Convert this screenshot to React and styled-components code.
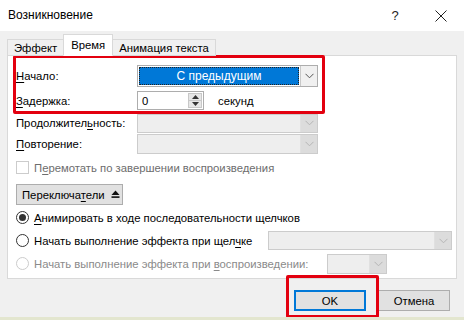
import React from "react";
import styled, { createGlobalStyle } from "styled-components";

const Global = createGlobalStyle`
  html, body { margin: 0; padding: 0; background: #f0f0f0; }
  body { font-family: "Liberation Sans", Arial, sans-serif; font-size: 11.3px; color: #000; }
`;

const Dialog = styled.div`
  position: relative;
  width: 464px;
  height: 320px;
  background: #f0f0f0;
  display: flex;
  flex-direction: column;
  overflow: hidden;
  border-bottom: 3px solid #e3e6cf;
  box-sizing: border-box;
`;

const TitleBar = styled.div`
  height: 31px;
  background: #fff;
  display: flex;
  align-items: center;
  padding-left: 8px;
  font-size: 12px;
`;

const Title = styled.div`
  flex: 1;
  margin-top: -1px;
`;

const TitleBtn = styled.div`
  width: 46px;
  display: flex;
  justify-content: center;
  font-size: 13px;
  color: #222;
`;

const Body = styled.div`
  padding: 5px 7px 0 7px;
  display: flex;
  flex-direction: column;
`;

const Tabs = styled.div`
  display: flex;
  align-items: flex-end;
  height: 20px;
  position: relative;
  z-index: 1;
  margin-bottom: -1px;
`;

const Tab = styled.div`
  height: ${(p) => (p.$active ? "20px" : "15px")};
  padding: 0 ${(p) => (p.$active ? "7px" : "6px")};
  background: ${(p) => (p.$active ? "#fff" : "#f0f0f0")};
  border: 1px solid #d9d9d9;
  border-bottom: ${(p) => (p.$active ? "1px solid #fff" : "1px solid #d9d9d9")};
  border-left: ${(p) => (p.$first || p.$active ? "1px solid #d9d9d9" : "none")};
  border-right: ${(p) => (p.$beforeActive ? "none" : "1px solid #d9d9d9")};
  display: flex;
  align-items: ${(p) => (p.$active ? "center" : "flex-end")};
  line-height: 14px;
  box-sizing: content-box;
  white-space: nowrap;
`;

const Panel = styled.div`
  background: #fff;
  border: 1px solid #d9d9d9;
  height: 224px;
  box-sizing: border-box;
  padding: 8px 4px 0 8px;
  display: flex;
  flex-direction: column;
`;

const FormRow = styled.div`
  display: flex;
  align-items: center;
  height: ${(p) => p.$h || 21}px;
  white-space: nowrap;
`;

const Label = styled.div`
  width: 121px;
`;

const U = styled.span`
  text-decoration: underline;
  text-underline-offset: 2px;
`;

const Combo = styled.div`
  width: ${(p) => p.$w}px;
  height: ${(p) => p.$h || 19}px;
  border: 1px solid ${(p) => (p.$disabled ? "#cccccc" : "#adadad")};
  background: ${(p) => (p.$disabled ? "#eeeeee" : "#fff")};
  display: flex;
  flex-shrink: 0;
  box-sizing: border-box;
  margin-left: ${(p) => (p.$right ? "auto" : `${p.$ml || 0}px`)};
`;

const ComboValue = styled.div`
  flex: 1;
  margin: 1px;
  background: ${(p) => (p.$selected ? "#0078d7" : "transparent")};
  color: #fff;
  outline: ${(p) => (p.$selected ? "1px dotted #222" : "none")};
  outline-offset: -1px;
  display: flex;
  align-items: center;
  justify-content: center;
  font-size: 12px;
`;

const ComboArrow = styled.div`
  width: 16px;
  border-left: 1px solid ${(p) => (p.$disabled ? "#e0e0e0" : "#c8c8c8")};
  background: ${(p) => (p.$disabled ? "#dcdcdc" : "#f0f0f0")};
  display: flex;
  align-items: center;
  justify-content: center;
`;

const Spin = styled.div`
  width: 67px;
  height: 19px;
  border: 1px solid #adadad;
  background: #fff;
  display: flex;
  box-sizing: border-box;
`;

const SpinValue = styled.div`
  flex: 1;
  padding-left: 4px;
  display: flex;
  align-items: center;
`;

const SpinButtons = styled.div`
  width: 12px;
  margin: 1px;
  display: flex;
  flex-direction: column;
  background: #e6e6e6;
  border: 1px solid #c8c8c8;
`;

const SpinHalf = styled.div`
  flex: 1;
  display: flex;
  align-items: center;
  justify-content: center;
  border-top: ${(p) => (p.$bottom ? "1px solid #c8c8c8" : "none")};
`;

const Units = styled.div`
  margin-left: 14px;
`;

const CheckRow = styled.div`
  display: flex;
  align-items: center;
  height: 19px;
  margin-top: 3px;
  color: #6d6d6d;
  white-space: nowrap;
`;

const CheckBox = styled.div`
  width: 11px;
  height: 11px;
  border: 1px solid #cccccc;
  background: #fff;
  margin-right: 5px;
`;

const ToggleButton = styled.div`
  margin-top: 7px;
  width: 107px;
  height: 21px;
  box-sizing: border-box;
  background: #e1e1e1;
  border: 1px solid #adadad;
  display: flex;
  align-items: center;
  padding-left: 5px;
  gap: 6px;
  white-space: nowrap;
`;

const RadioRow = styled.div`
  display: flex;
  align-items: center;
  height: ${(p) => p.$h || 23}px;
  color: ${(p) => (p.$disabled ? "#8a8a8a" : "#000")};
  white-space: nowrap;
`;

const Radio = styled.div`
  width: 11px;
  height: 11px;
  flex-shrink: 0;
  border-radius: 50%;
  border: 1px solid ${(p) => (p.$disabled ? "#cccccc" : "#333")};
  background: #fff;
  margin-right: 5px;
  display: flex;
  align-items: center;
  justify-content: center;
  &::after {
    content: "";
    display: ${(p) => (p.$checked ? "block" : "none")};
    width: 7px;
    height: 7px;
    border-radius: 50%;
    background: #333;
  }
`;

const Footer = styled.div`
  display: flex;
  justify-content: flex-end;
  gap: 12px;
  padding: 11px 7px 0 0;
`;

const Button = styled.div`
  width: 72px;
  height: 21px;
  box-sizing: border-box;
  background: #e1e1e1;
  border: ${(p) => (p.$default ? "2px solid #0078d7" : "1px solid #adadad")};
  display: flex;
  align-items: center;
  justify-content: center;
`;

const Highlight = styled.div`
  position: absolute;
  border: 3px solid #e3000f;
  border-radius: 2px;
  pointer-events: none;
  left: ${(p) => p.$x}px;
  top: ${(p) => p.$y}px;
  width: ${(p) => p.$w}px;
  height: ${(p) => p.$h}px;
  box-sizing: border-box;
`;

const Chevron = ({ color = "#555" }) => (
  <svg width="9" height="6" viewBox="0 0 9 6">
    <path d="M0.5 0.8 L4.5 4.8 L8.5 0.8" fill="none" stroke={color} strokeWidth="1" />
  </svg>
);

const Tri = ({ up }) => (
  <svg width="7" height="4" viewBox="0 0 7 4">
    <path d={up ? "M0 4 L3.5 0 L7 4 Z" : "M0 0 L3.5 4 L7 0 Z"} fill="#333" />
  </svg>
);

const CloseIcon = () => (
  <svg width="12" height="12" viewBox="0 0 12 12">
    <path d="M0.5 0.5 L11.5 11.5 M11.5 0.5 L0.5 11.5" stroke="#222" strokeWidth="1" fill="none" />
  </svg>
);

const EjectIcon = () => (
  <svg width="9" height="9" viewBox="0 0 9 9">
    <path d="M0.5 5 L4.5 0.5 L8.5 5 Z" fill="#111" />
    <rect x="0.5" y="6.3" width="8" height="1.6" fill="#111" />
  </svg>
);

export default function App() {
  return (
    <>
      <Global />
      <Dialog>
        <TitleBar>
          <Title>Возникновение</Title>
          <TitleBtn>?</TitleBtn>
          <TitleBtn>
            <CloseIcon />
          </TitleBtn>
        </TitleBar>
        <Body>
          <Tabs>
            <Tab $first $beforeActive>Эффект</Tab>
            <Tab $active>Время</Tab>
            <Tab>Анимация текста</Tab>
          </Tabs>
          <Panel>
            <FormRow $h={24}>
              <Label>
                <U>Н</U>ачало:
              </Label>
              <Combo $w={181} $h={22}>
                <ComboValue $selected>С предыдущим</ComboValue>
                <ComboArrow>
                  <Chevron />
                </ComboArrow>
              </Combo>
            </FormRow>
            <FormRow $h={25}>
              <Label>
                <U>З</U>адержка:
              </Label>
              <Spin>
                <SpinValue>0</SpinValue>
                <SpinButtons>
                  <SpinHalf>
                    <Tri up />
                  </SpinHalf>
                  <SpinHalf $bottom>
                    <Tri />
                  </SpinHalf>
                </SpinButtons>
              </Spin>
              <Units>секунд</Units>
            </FormRow>
            <FormRow $h={20}>
              <Label>
                Продолжител<U>ь</U>ность:
              </Label>
              <Combo $w={181} $disabled>
                <ComboValue />
                <ComboArrow $disabled>
                  <Chevron color="#b5b5b5" />
                </ComboArrow>
              </Combo>
            </FormRow>
            <FormRow $h={22}>
              <Label>
                <U>П</U>овторение:
              </Label>
              <Combo $w={181} $h={20} $disabled>
                <ComboValue />
                <ComboArrow $disabled>
                  <Chevron color="#b5b5b5" />
                </ComboArrow>
              </Combo>
            </FormRow>
            <CheckRow>
              <CheckBox />
              <span>
                П<U>е</U>ремотать по завершении воспроизведения
              </span>
            </CheckRow>
            <ToggleButton>
              <span>
                Переключа<U>т</U>ели
              </span>
              <EjectIcon />
            </ToggleButton>
            <RadioRow $h={25}>
              <Radio $checked />
              <span>
                <U>А</U>нимировать в ходе последовательности щелчков
              </span>
            </RadioRow>
            <RadioRow $h={21}>
              <Radio />
              <span>
                Начать выполнение эффекта при щел<U>ч</U>ке
              </span>
              <Combo $w={184} $h={19} $right $disabled>
                <ComboValue />
                <ComboArrow $disabled>
                  <Chevron color="#b5b5b5" />
                </ComboArrow>
              </Combo>
            </RadioRow>
            <RadioRow $h={25} $disabled>
              <Radio $disabled />
              <span>
                Начать выполнение эффекта при <U>в</U>оспроизведении:
              </span>
              <Combo $w={60} $h={20} $ml={19} $disabled>
                <ComboValue />
                <ComboArrow $disabled>
                  <Chevron color="#b5b5b5" />
                </ComboArrow>
              </Combo>
            </RadioRow>
          </Panel>
          <Footer>
            <Button $default>OK</Button>
            <Button>Отмена</Button>
          </Footer>
        </Body>
        <Highlight $x={13} $y={55} $w={312} $h={59} />
        <Highlight $x={286} $y={275} $w={93} $h={43} />
      </Dialog>
    </>
  );
}
